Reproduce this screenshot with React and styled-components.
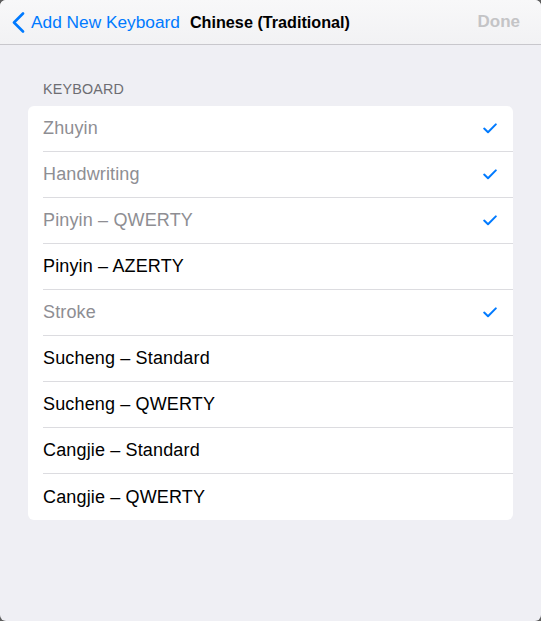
import styled, { createGlobalStyle } from 'styled-components'

const GlobalStyle = createGlobalStyle`
    html, body {
        margin: 0;
        padding: 0;
        background: #5e5e5e;
    }
    body {
        font-family: "Liberation Sans", Arial, sans-serif;
    }
`

const keyboards = [
    { name: "Zhuyin", added: true },
    { name: "Handwriting", added: true },
    { name: "Pinyin – QWERTY", added: true },
    { name: "Pinyin – AZERTY", added: false },
    { name: "Stroke", added: true },
    { name: "Sucheng – Standard", added: false },
    { name: "Sucheng – QWERTY", added: false },
    { name: "Cangjie – Standard", added: false },
    { name: "Cangjie – QWERTY", added: false },
]

const Window = styled.div`
    width: 541px;
    height: 621px;
    border-radius: 6px;
    overflow: hidden;
    background: #efeff4;
    display: flex;
    flex-direction: column;
`

const NavBar = styled.header`
    height: 44px;
    flex-shrink: 0;
    background: linear-gradient(#f8f8f9, #f2f2f4);
    border-bottom: 1px solid #c8c7cc;
    display: flex;
    align-items: center;
    padding: 0 21px 0 12px;
    font-size: 17.3px;
`

const BackButton = styled.button`
    border: none;
    background: none;
    padding: 0;
    display: flex;
    align-items: center;
    gap: 6px;
    color: #007aff;
    font: inherit;
    cursor: pointer;
`

const Title = styled.h1`
    margin: 0 0 0 10px;
    font-size: 16.2px;
    font-weight: bold;
    color: #000;
    flex: 1;
`

const DoneButton = styled.button`
    border: none;
    background: none;
    padding: 0;
    font: inherit;
    font-size: 17px;
    font-weight: bold;
    color: #c4c4c6;
`

const Content = styled.main`
    padding: 36px 28px 0;
`

const SectionHeader = styled.div`
    padding-left: 15px;
    font-size: 14.3px;
    color: #6d6d72;
    margin-bottom: 9px;
    letter-spacing: 0.2px;
`

const List = styled.ul`
    list-style: none;
    margin: 0;
    padding: 0 0 0 15px;
    background: #fff;
    border-radius: 6px;
`

const Row = styled.li`
    height: 46px;
    display: flex;
    align-items: center;
    justify-content: space-between;
    padding-right: 16px;
    font-size: 18px;
    letter-spacing: 0.15px;
    color: ${p => (p.$added ? "#8e8e93" : "#000")};
    border-bottom: 1px solid #dcdce0;
    box-sizing: border-box;

    &:last-child {
        border-bottom: none;
    }
`

function Check() {
    return (
        <svg width="14" height="11" viewBox="0 0 14 11">
            <path d="M1.2 5.6 L5 9.2 L12.8 1.4" fill="none" stroke="#007aff" strokeWidth="2" strokeLinecap="round" strokeLinejoin="round" />
        </svg>
    )
}

export default function App() {
    return (
        <Window>
            <GlobalStyle />
            <NavBar>
                <BackButton>
                    <svg width="13" height="21" viewBox="0 0 13 21">
                        <path d="M11 1.5 L2 10.5 L11 19.5" fill="none" stroke="#007aff" strokeWidth="2.6" strokeLinecap="round" strokeLinejoin="round" />
                    </svg>
                    Add New Keyboard
                </BackButton>
                <Title>Chinese (Traditional)</Title>
                <DoneButton>Done</DoneButton>
            </NavBar>
            <Content>
                <SectionHeader>KEYBOARD</SectionHeader>
                <List>
                    {keyboards.map(k => (
                        <Row key={k.name} $added={k.added}>
                            {k.name}
                            {k.added && <Check />}
                        </Row>
                    ))}
                </List>
            </Content>
        </Window>
    )
}
